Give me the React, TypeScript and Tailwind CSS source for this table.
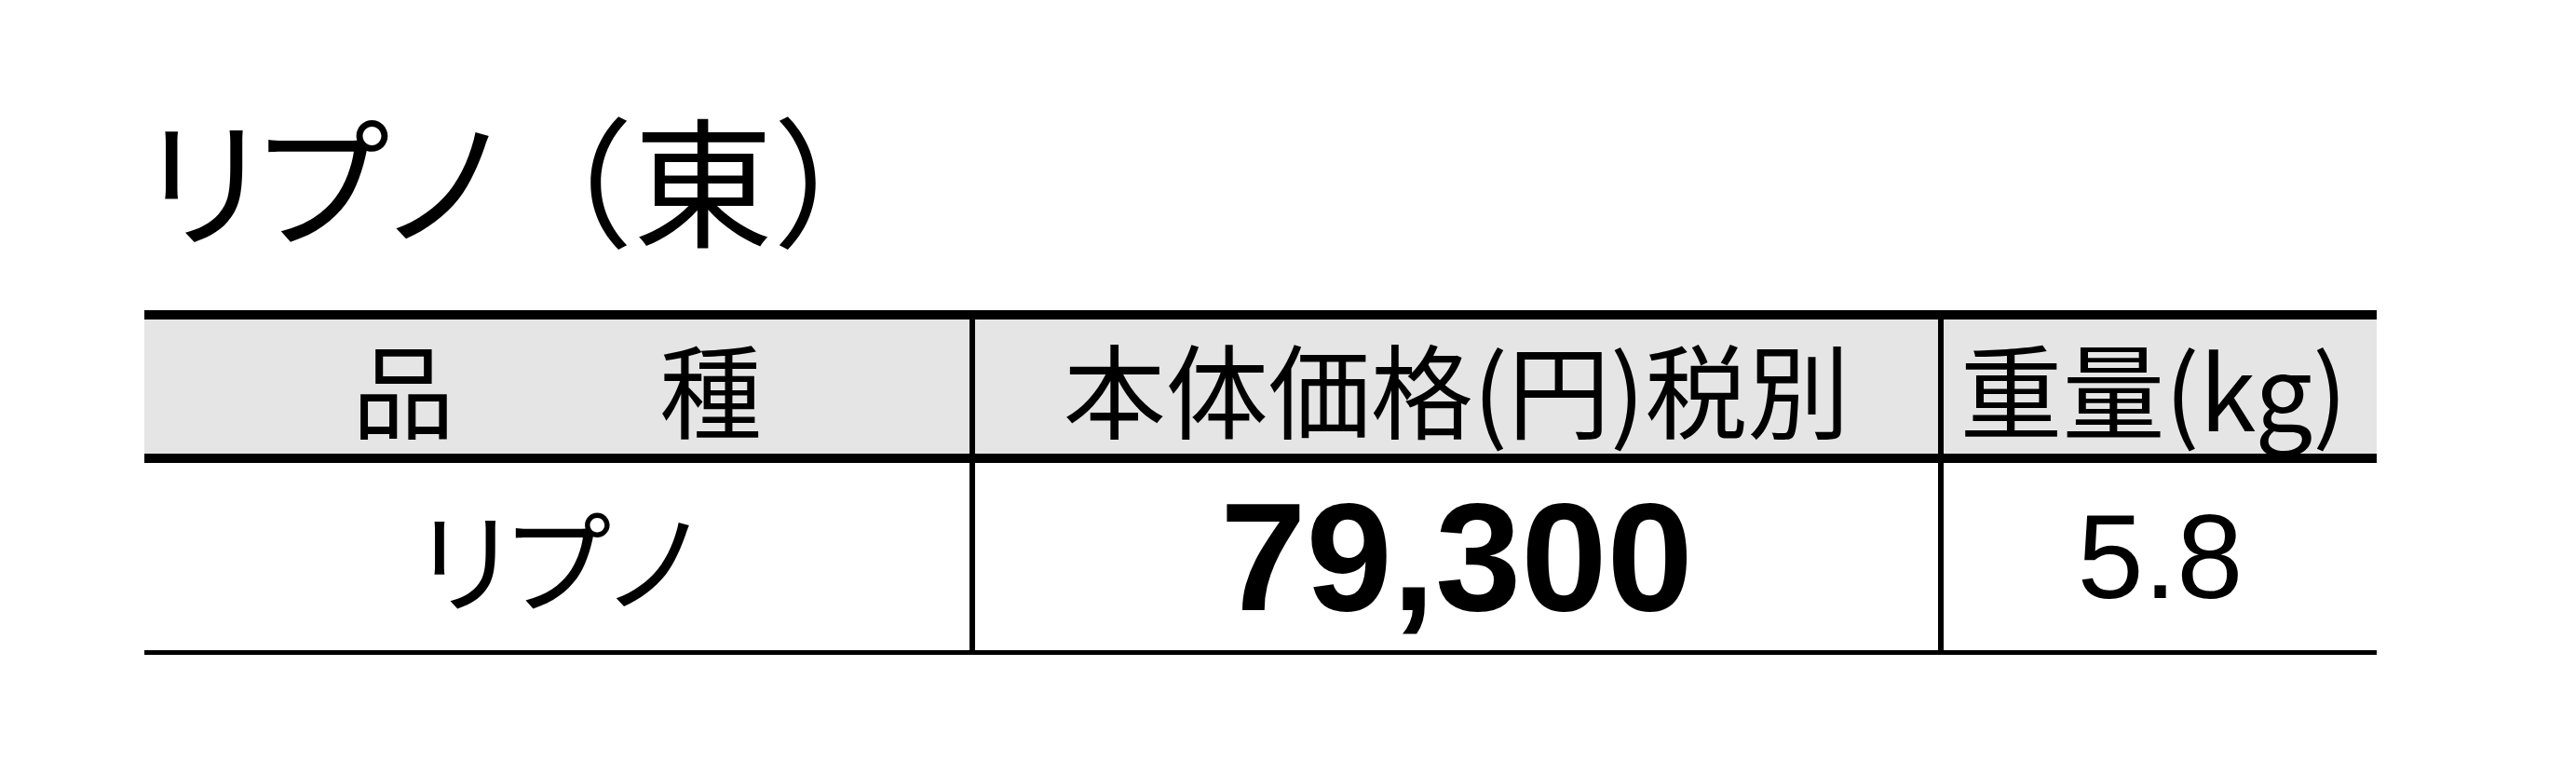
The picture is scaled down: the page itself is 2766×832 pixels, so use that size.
const jp = "font-['Noto_Sans_CJK_JP','Noto_Sans',sans-serif]";
const num = "font-['Liberation_Sans',Arial,sans-serif]";

export default function App() {
  return (
    <div className={`w-[2766px] h-[832px] bg-white text-black ${jp}`}>
      <div className="pl-[155px] pt-[114px]">
        {/* 見出し */}
        <h1 className="text-[150px] leading-[150px] h-[150px] whitespace-nowrap">
          <span className="[font-feature-settings:'palt']">リプノ</span>
          <span className="-ml-[4px]">（東）</span>
        </h1>

        <div className="mt-[69px] w-[2397px]">
          {/* ヘッダー */}
          <div className="grid grid-cols-[886px_1040px_1fr] h-[164px] border-y-[10px] border-black bg-[#e5e5e5] text-[110px] leading-none">
            <div className="flex items-center justify-center whitespace-pre">品　　種</div>
            <div className="flex items-center justify-center border-l-[6px] border-black">本体価格(円)税別</div>
            <div className="flex items-center justify-center border-l-[6px] border-black pr-[14px]">重量(kg)</div>
          </div>

          {/* データ行 */}
          <div className="grid grid-cols-[886px_1040px_1fr] h-[206px] border-b-[5px] border-black">
            <div className="flex items-center justify-center text-[118px] leading-none [font-feature-settings:'palt']">
              リプノ
            </div>
            <div className={`flex items-center justify-center border-l-[6px] border-black ${num} font-bold text-[166px] leading-none`}>
              79,300
            </div>
            <div className={`flex items-center justify-center border-l-[6px] border-black ${num} text-[128px] leading-none`}>
              5.8
            </div>
          </div>
        </div>
      </div>
    </div>
  );
}
